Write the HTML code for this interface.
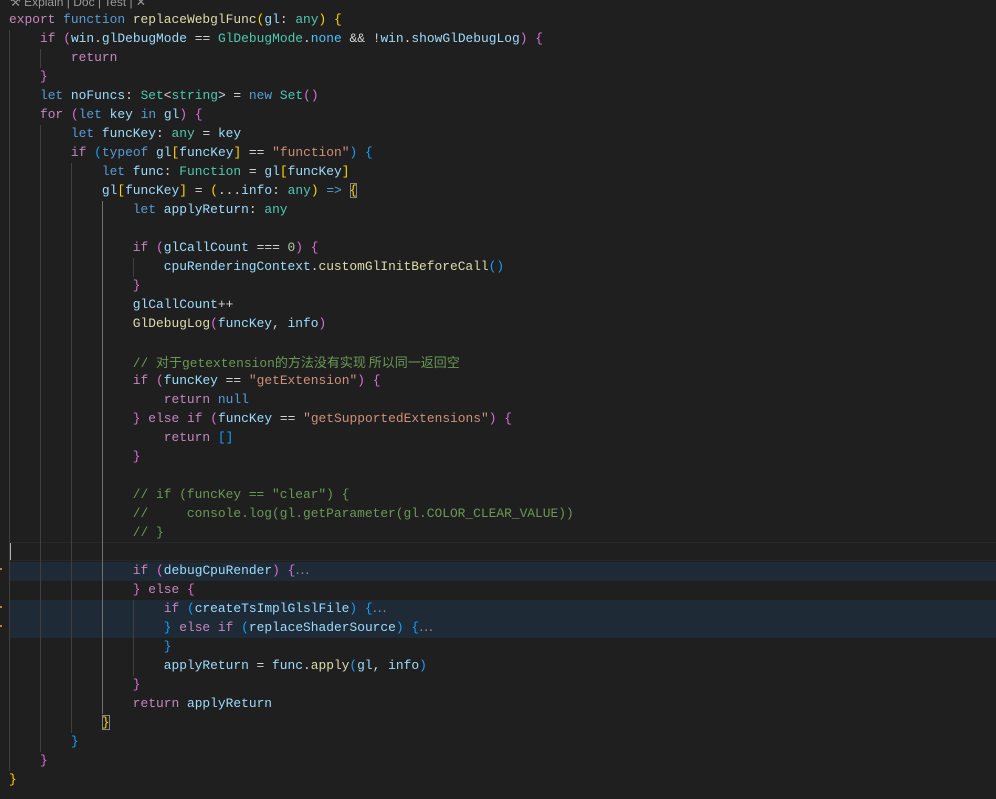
<!DOCTYPE html>
<html><head><meta charset="utf-8"><style>
body{margin:0;width:996px;height:799px;background:#1f1f1f;overflow:hidden;position:relative;font-family:"Liberation Mono","Noto Sans CJK SC",monospace;font-size:12.9px;color:#d4d4d4}
.l{position:absolute;left:9px;height:19px;line-height:19px;white-space:pre}
.hl{position:absolute;left:9px;right:0;height:19px;background:#1e2a36}
.g{position:absolute;width:1px;background:#404040}
.k{color:#c586c0}.b{color:#569cd6}.f{color:#dcdcaa}.v{color:#9cdcfe}.t{color:#4ec9b0}.s{color:#ce9178}.c{color:#6a9955}.n{color:#b5cea8}
.y{color:#ffd700}.p{color:#da70d6}.u{color:#179fff}.d{color:#8b8b8b}
.bx{outline:1px solid #888;outline-offset:-1px}
.cjk{font-family:"Noto Sans CJK SC",sans-serif;font-size:13px}
</style></head><body>
<div class="hl" style="top:562px"></div>
<div class="hl" style="top:600px;height:38px"></div>
<div style="position:absolute;left:9px;right:0;top:542px;height:19px;border-top:1px solid #282828;border-bottom:1px solid #282828;box-sizing:border-box"></div>
<div style="position:absolute;left:9px;top:543px;width:2px;height:17px;background:#aeafad"></div>
<div class="g" style="left:9px;top:30px;height:741px"></div>
<div class="g" style="left:40px;top:49px;height:19px"></div>
<div class="g" style="left:40px;top:125px;height:627px"></div>
<div class="g" style="left:71px;top:163px;height:570px"></div>
<div class="g" style="left:102px;top:201px;height:513px;background:#707070"></div>
<div class="g" style="left:133px;top:258px;height:19px"></div>
<div class="g" style="left:133px;top:600px;height:76px"></div>
<div style="position:absolute;left:0;top:568px;width:2px;height:2px;background:#c08030"></div>
<div style="position:absolute;left:0;top:606px;width:2px;height:2px;background:#c08030"></div>
<div style="position:absolute;left:0;top:625px;width:2px;height:2px;background:#c08030"></div>
<div class="l" style="top:-7px;left:10px;font-family:'Liberation Sans',sans-serif;font-size:12px;color:#999">&#x2692; Explain | Doc | Test | ✕</div>
<div class="l" style="top:10px"><span class="k">export</span> <span class="b">function</span> <span class="f">replaceWebglFunc</span><span class="y">(</span><span class="v">gl</span>: <span class="t">any</span><span class="y">)</span> <span class="y">{</span></div>
<div class="l" style="top:29px">    <span class="k">if</span> <span class="p">(</span><span class="v">win</span>.<span class="v">glDebugMode</span> == <span class="t">GlDebugMode</span>.<span class="v" style="color:#4fc1ff">none</span> &amp;&amp; !<span class="v">win</span>.<span class="v">showGlDebugLog</span><span class="p">)</span> <span class="p">{</span></div>
<div class="l" style="top:48px">        <span class="k">return</span></div>
<div class="l" style="top:67px">    <span class="p">}</span></div>
<div class="l" style="top:86px">    <span class="b">let</span> <span class="v">noFuncs</span>: <span class="t">Set</span>&lt;<span class="t">string</span>&gt; = <span class="b">new</span> <span class="t">Set</span><span class="p">()</span></div>
<div class="l" style="top:105px">    <span class="k">for</span> <span class="p">(</span><span class="b">let</span> <span class="v">key</span> <span class="b">in</span> <span class="v">gl</span><span class="p">)</span> <span class="p">{</span></div>
<div class="l" style="top:124px">        <span class="b">let</span> <span class="v">funcKey</span>: <span class="t">any</span> = <span class="v">key</span></div>
<div class="l" style="top:143px">        <span class="k">if</span> <span class="u">(</span><span class="b">typeof</span> <span class="v">gl</span><span class="y">[</span><span class="v">funcKey</span><span class="y">]</span> == <span class="s">"function"</span><span class="u">)</span> <span class="u">{</span></div>
<div class="l" style="top:162px">            <span class="b">let</span> <span class="v">func</span>: <span class="t">Function</span> = <span class="v">gl</span><span class="y">[</span><span class="v">funcKey</span><span class="y">]</span></div>
<div class="l" style="top:181px">            <span class="v">gl</span><span class="y">[</span><span class="v">funcKey</span><span class="y">]</span> = <span class="y">(</span>...<span class="v">info</span>: <span class="t">any</span><span class="y">)</span> <span class="b">=&gt;</span> <span class="y bx">{</span></div>
<div class="l" style="top:200px">                <span class="b">let</span> <span class="v">applyReturn</span>: <span class="t">any</span></div>
<div class="l" style="top:238px">                <span class="k">if</span> <span class="p">(</span><span class="v">glCallCount</span> === <span class="n">0</span><span class="p">)</span> <span class="p">{</span></div>
<div class="l" style="top:257px">                    <span class="v">cpuRenderingContext</span>.<span class="f">customGlInitBeforeCall</span><span class="u">()</span></div>
<div class="l" style="top:276px">                <span class="p">}</span></div>
<div class="l" style="top:295px">                <span class="v">glCallCount</span>++</div>
<div class="l" style="top:314px">                <span class="f">GlDebugLog</span><span class="p">(</span><span class="v">funcKey</span>, <span class="v">info</span><span class="p">)</span></div>
<div class="l" style="top:352px">                <span class="c">// <span class="cjk">对于</span>getextension<span class="cjk">的方法没有实现 所以同一返回空</span></span></div>
<div class="l" style="top:371px">                <span class="k">if</span> <span class="p">(</span><span class="v">funcKey</span> == <span class="s">"getExtension"</span><span class="p">)</span> <span class="p">{</span></div>
<div class="l" style="top:390px">                    <span class="k">return</span> <span class="b">null</span></div>
<div class="l" style="top:409px">                <span class="p">}</span> <span class="k">else</span> <span class="k">if</span> <span class="p">(</span><span class="v">funcKey</span> == <span class="s">"getSupportedExtensions"</span><span class="p">)</span> <span class="p">{</span></div>
<div class="l" style="top:428px">                    <span class="k">return</span> <span class="u">[]</span></div>
<div class="l" style="top:447px">                <span class="p">}</span></div>
<div class="l" style="top:485px">                <span class="c">// if (funcKey == "clear") {</span></div>
<div class="l" style="top:504px">                <span class="c">//     console.log(gl.getParameter(gl.COLOR_CLEAR_VALUE))</span></div>
<div class="l" style="top:523px">                <span class="c">// }</span></div>
<div class="l" style="top:561px">                <span class="k">if</span> <span class="p">(</span><span class="v">debugCpuRender</span><span class="p">)</span> <span class="p">{</span><span class="d">⋯</span></div>
<div class="l" style="top:580px">                <span class="p">}</span> <span class="k">else</span> <span class="p">{</span></div>
<div class="l" style="top:599px">                    <span class="k">if</span> <span class="u">(</span><span class="v">createTsImplGlslFile</span><span class="u">)</span> <span class="u">{</span><span class="d">⋯</span></div>
<div class="l" style="top:618px">                    <span class="u">}</span> <span class="k">else</span> <span class="k">if</span> <span class="u">(</span><span class="v">replaceShaderSource</span><span class="u">)</span> <span class="u">{</span><span class="d">⋯</span></div>
<div class="l" style="top:637px">                    <span class="u">}</span></div>
<div class="l" style="top:656px">                    <span class="v">applyReturn</span> = <span class="v">func</span>.<span class="f">apply</span><span class="u">(</span><span class="v">gl</span>, <span class="v">info</span><span class="u">)</span></div>
<div class="l" style="top:675px">                <span class="p">}</span></div>
<div class="l" style="top:694px">                <span class="k">return</span> <span class="v">applyReturn</span></div>
<div class="l" style="top:713px">            <span class="y bx">}</span></div>
<div class="l" style="top:732px">        <span class="u">}</span></div>
<div class="l" style="top:751px">    <span class="p">}</span></div>
<div class="l" style="top:770px"><span class="y">}</span></div>
</body></html>
